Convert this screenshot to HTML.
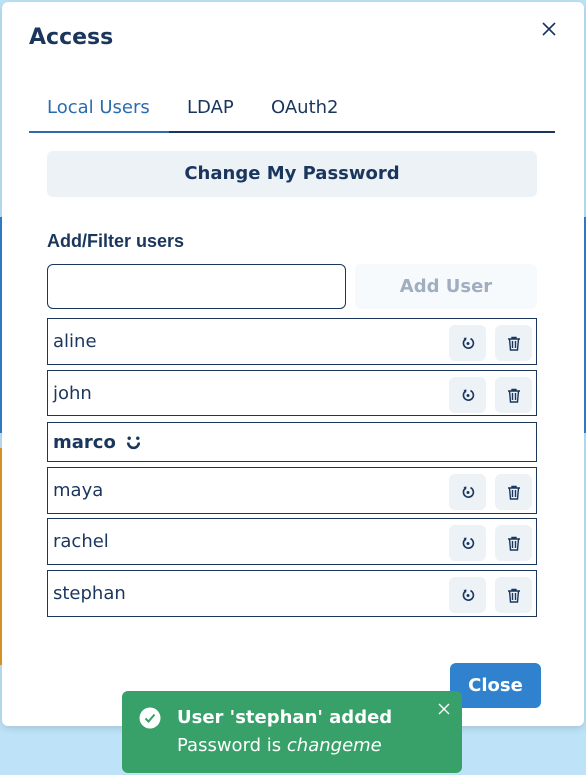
<!DOCTYPE html>
<html><head><style>
*{box-sizing:border-box;margin:0;padding:0}
body{width:586px;height:775px;background:#bee3f8;position:relative;overflow:hidden;font-family:"DejaVu Sans",sans-serif;color:#1a365d}
.stripe{position:absolute}
.modal{position:absolute;left:2px;top:2px;width:582px;height:724px;background:#fff;border-radius:6px;box-shadow:0 2px 8px rgba(0,0,0,.15)}
.abs{position:absolute}
.row{position:absolute;left:47px;width:490px;border:1.5px solid #1a365d;font-size:18px;padding-left:5px;display:flex;align-items:center}
.btn{position:absolute;top:6px;width:37px;height:36px;background:#edf2f7;border-radius:6px;display:flex;align-items:center;justify-content:center}
</style></head><body>
<div class="stripe" style="left:0;top:217px;width:3px;height:216px;background:#3182ce"></div>
<div class="stripe" style="left:0;top:448px;width:3px;height:217px;background:#dd9b2a"></div>
<div class="stripe" style="left:583px;top:217px;width:3px;height:216px;background:#3182ce"></div>
<div class="modal"></div>
<div class="abs" style="left:29px;top:25px;font-size:22px;font-weight:bold">Access</div>
<svg class="abs" style="left:541px;top:21px" width="16" height="16" viewBox="0 0 16 16"><path d="M2 2L14 14M14 2L2 14" stroke="#1a365d" stroke-width="1.6"/></svg>
<div class="abs" style="left:47px;top:97px;font-size:18px;color:#2b6cb0">Local Users</div>
<div class="abs" style="left:187px;top:97px;font-size:18px">LDAP</div>
<div class="abs" style="left:271px;top:97px;font-size:18px">OAuth2</div>
<div class="abs" style="left:29px;top:131px;width:526px;height:2px;background:#1a365d"></div>
<div class="abs" style="left:29px;top:131px;width:140px;height:2px;background:#2b6cb0"></div>
<div class="abs" style="left:47px;top:151px;width:490px;height:46px;background:#edf2f7;border-radius:6px;font-size:18px;font-weight:bold;text-align:center;line-height:46px">Change My Password</div>
<div class="abs" style="left:47px;top:231px;font-family:'Liberation Sans',sans-serif;font-weight:bold;font-size:18px">Add/Filter users</div>
<div class="abs" style="left:47px;top:264px;width:299px;height:45px;border:1px solid #1a365d;border-radius:6px"></div>
<div class="abs" style="left:355px;top:264px;width:182px;height:45px;background:#f7fafc;border-radius:6px;color:#a0aec0;font-weight:bold;font-size:18px;text-align:center;line-height:45px">Add User</div>

<div class="row" style="top:318px;height:47px">aline<div class="btn" style="left:401px"><svg width="14" height="14" viewBox="0 0 14 14"><path d="M4 3.5A5 5 0 1 0 9.5 2.6" fill="none" stroke="#1a365d" stroke-width="1.6"/><path d="M2.5 2L5.5 1.5L5 5Z" fill="#1a365d"/><circle cx="7" cy="7.5" r="1.5" fill="#1a365d"/></svg></div><div class="btn" style="left:447px"><svg width="14" height="15" viewBox="0 0 14 15"><path d="M1 3H13M5 3V1.5H9V3M2.5 3L3.5 14H10.5L11.5 3M5.5 5V12M8.5 5V12" fill="none" stroke="#1a365d" stroke-width="1.4"/></svg></div></div>
<div class="row" style="top:370px;height:46px">john<div class="btn" style="left:401px"><svg width="14" height="14" viewBox="0 0 14 14"><path d="M4 3.5A5 5 0 1 0 9.5 2.6" fill="none" stroke="#1a365d" stroke-width="1.6"/><path d="M2.5 2L5.5 1.5L5 5Z" fill="#1a365d"/><circle cx="7" cy="7.5" r="1.5" fill="#1a365d"/></svg></div><div class="btn" style="left:447px"><svg width="14" height="15" viewBox="0 0 14 15"><path d="M1 3H13M5 3V1.5H9V3M2.5 3L3.5 14H10.5L11.5 3M5.5 5V12M8.5 5V12" fill="none" stroke="#1a365d" stroke-width="1.4"/></svg></div></div>
<div class="row" style="top:422px;height:40px;font-weight:bold">marco <svg style="margin-left:10px" width="15" height="15" viewBox="0 0 14 14"><circle cx="3" cy="3" r="1.6" fill="#1a365d"/><circle cx="11" cy="3" r="1.6" fill="#1a365d"/><path d="M2 7A5 5 0 0 0 12 7" fill="none" stroke="#1a365d" stroke-width="2.4"/></svg></div>
<div class="row" style="top:467px;height:47px">maya<div class="btn" style="left:401px"><svg width="14" height="14" viewBox="0 0 14 14"><path d="M4 3.5A5 5 0 1 0 9.5 2.6" fill="none" stroke="#1a365d" stroke-width="1.6"/><path d="M2.5 2L5.5 1.5L5 5Z" fill="#1a365d"/><circle cx="7" cy="7.5" r="1.5" fill="#1a365d"/></svg></div><div class="btn" style="left:447px"><svg width="14" height="15" viewBox="0 0 14 15"><path d="M1 3H13M5 3V1.5H9V3M2.5 3L3.5 14H10.5L11.5 3M5.5 5V12M8.5 5V12" fill="none" stroke="#1a365d" stroke-width="1.4"/></svg></div></div>
<div class="row" style="top:518px;height:47px">rachel<div class="btn" style="left:401px"><svg width="14" height="14" viewBox="0 0 14 14"><path d="M4 3.5A5 5 0 1 0 9.5 2.6" fill="none" stroke="#1a365d" stroke-width="1.6"/><path d="M2.5 2L5.5 1.5L5 5Z" fill="#1a365d"/><circle cx="7" cy="7.5" r="1.5" fill="#1a365d"/></svg></div><div class="btn" style="left:447px"><svg width="14" height="15" viewBox="0 0 14 15"><path d="M1 3H13M5 3V1.5H9V3M2.5 3L3.5 14H10.5L11.5 3M5.5 5V12M8.5 5V12" fill="none" stroke="#1a365d" stroke-width="1.4"/></svg></div></div>
<div class="row" style="top:570px;height:47px">stephan<div class="btn" style="left:401px"><svg width="14" height="14" viewBox="0 0 14 14"><path d="M4 3.5A5 5 0 1 0 9.5 2.6" fill="none" stroke="#1a365d" stroke-width="1.6"/><path d="M2.5 2L5.5 1.5L5 5Z" fill="#1a365d"/><circle cx="7" cy="7.5" r="1.5" fill="#1a365d"/></svg></div><div class="btn" style="left:447px"><svg width="14" height="15" viewBox="0 0 14 15"><path d="M1 3H13M5 3V1.5H9V3M2.5 3L3.5 14H10.5L11.5 3M5.5 5V12M8.5 5V12" fill="none" stroke="#1a365d" stroke-width="1.4"/></svg></div></div>

<div class="abs" style="left:450px;top:663px;width:91px;height:45px;background:#3182ce;border-radius:6px;color:#fff;font-weight:bold;font-size:18px;text-align:center;line-height:45px">Close</div>
<div class="abs" style="left:122px;top:691px;width:340px;height:82px;background:#38a169;border-radius:6px;color:#fff">
<svg class="abs" style="left:17px;top:16px" width="22" height="22" viewBox="0 0 22 22"><circle cx="11" cy="11" r="10.5" fill="#fff"/><path d="M6.5 11.5L9.5 14.5L15.5 7.5" fill="none" stroke="#38a169" stroke-width="2"/></svg>
<div class="abs" style="left:55px;top:16px;font-weight:bold;font-size:18px">User 'stephan' added</div>
<div class="abs" style="left:55px;top:44px;font-size:18px">Password is <i>changeme</i></div>
<svg class="abs" style="left:316px;top:12px" width="12" height="12" viewBox="0 0 12 12"><path d="M1 1L11 11M11 1L1 11" stroke="#fff" stroke-width="1.4"/></svg>
</div>
</body></html>
